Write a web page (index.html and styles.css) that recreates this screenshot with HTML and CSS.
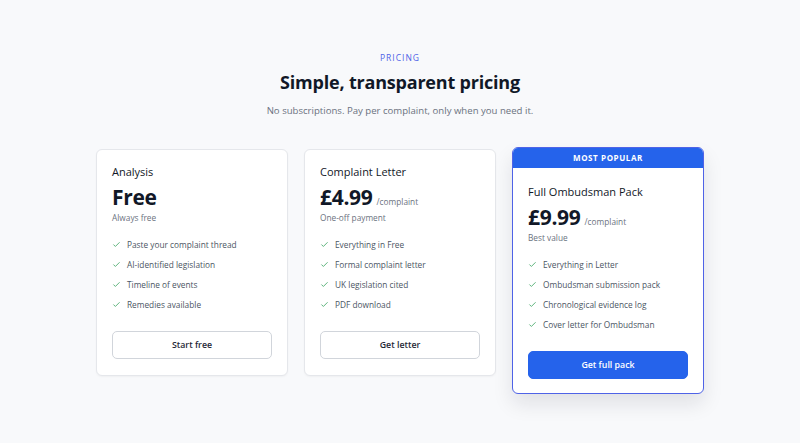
FILE: index.html
```html
<!DOCTYPE html>
<html lang="en">
<head>
  <meta charset="UTF-8" />
  <meta name="viewport" content="width=device-width, initial-scale=1.0"/>
  <title>Pricing</title>
  <link rel="stylesheet" href="styles.css">
</head>
<body>

<section class="pricing">
  <p class="eyebrow">PRICING</p>
  <h1>Simple, transparent pricing</h1>
  <p class="lead">No subscriptions. Pay per complaint, only when you need it.</p>

  <div class="plans">
    <div class="plan">
      <div class="plan-body">
        <h3>Analysis</h3>
        <div class="price"><span class="amount">Free</span></div>
        <p class="note">Always free</p>
        <ul class="features">
          <li><svg viewBox="0 0 16 16"><path d="M3 8.5l3 3 7-7"/></svg>Paste your complaint thread</li>
          <li><svg viewBox="0 0 16 16"><path d="M3 8.5l3 3 7-7"/></svg>AI-identified legislation</li>
          <li><svg viewBox="0 0 16 16"><path d="M3 8.5l3 3 7-7"/></svg>Timeline of events</li>
          <li><svg viewBox="0 0 16 16"><path d="M3 8.5l3 3 7-7"/></svg>Remedies available</li>
        </ul>
        <button type="button" class="btn">Start free</button>
      </div>
    </div>

    <div class="plan">
      <div class="plan-body">
        <h3>Complaint Letter</h3>
        <div class="price"><span class="amount">£4.99</span><span class="per">/complaint</span></div>
        <p class="note">One-off payment</p>
        <ul class="features">
          <li><svg viewBox="0 0 16 16"><path d="M3 8.5l3 3 7-7"/></svg>Everything in Free</li>
          <li><svg viewBox="0 0 16 16"><path d="M3 8.5l3 3 7-7"/></svg>Formal complaint letter</li>
          <li><svg viewBox="0 0 16 16"><path d="M3 8.5l3 3 7-7"/></svg>UK legislation cited</li>
          <li><svg viewBox="0 0 16 16"><path d="M3 8.5l3 3 7-7"/></svg>PDF download</li>
        </ul>
        <button type="button" class="btn">Get letter</button>
      </div>
    </div>

    <div class="plan popular">
      <div class="badge">MOST POPULAR</div>
      <div class="plan-body">
        <h3>Full Ombudsman Pack</h3>
        <div class="price"><span class="amount">£9.99</span><span class="per">/complaint</span></div>
        <p class="note">Best value</p>
        <ul class="features">
          <li><svg viewBox="0 0 16 16"><path d="M3 8.5l3 3 7-7"/></svg>Everything in Letter</li>
          <li><svg viewBox="0 0 16 16"><path d="M3 8.5l3 3 7-7"/></svg>Ombudsman submission pack</li>
          <li><svg viewBox="0 0 16 16"><path d="M3 8.5l3 3 7-7"/></svg>Chronological evidence log</li>
          <li><svg viewBox="0 0 16 16"><path d="M3 8.5l3 3 7-7"/></svg>Cover letter for Ombudsman</li>
        </ul>
        <button type="button" class="btn btn-primary">Get full pack</button>
      </div>
    </div>
  </div>
</section>

</body>
</html>
```

FILE: styles.css
```css
* { box-sizing: border-box; }
body {
  margin: 0; background: #f8f9fb; color: #111827;
  font-family: "Open Sans", "Noto Sans", sans-serif;
}
.pricing { padding: 51px 16px 40px; text-align: center; }
.eyebrow {
  margin: 0; font-size: 8.5px; line-height: 14px; font-weight: 500; letter-spacing: 1px;
  color: #4f63e7;
}
h1 { margin: 5px 0 0; font-size: 18px; line-height: 24px; font-weight: 700; letter-spacing: -0.2px; }
.lead { margin: 10px 0 0; font-size: 9.6px; line-height: 14px; color: #6b7280; }

.plans {
  display: grid; grid-template-columns: repeat(3, 1fr); gap: 16px;
  max-width: 608px; margin: 31px auto 0; align-items: start; text-align: left;
}
.plan {
  background: #fff; border: 1px solid #e5e7eb; border-radius: 6px;
  box-shadow: 0 1px 2px rgba(0, 0, 0, 0.04);
}
.plan-body { padding: 14px 15px 16px; display: flex; flex-direction: column; }
.plan h3 { margin: 0; font-size: 11px; line-height: 15px; font-weight: 500; color: #111827; }
.price { display: flex; align-items: baseline; margin-top: 5px; height: 26px; }
.amount { font-size: 21px; line-height: 26px; font-weight: 700; letter-spacing: -0.3px; }
.per { margin-left: 4px; font-size: 8.3px; line-height: 1; color: #6b7280; }
.note { margin: 2px 0 0; font-size: 8.3px; line-height: 12px; color: #6b7280; }

.features { list-style: none; margin: 10px 0 0; padding: 0; }
.features li {
  display: flex; align-items: center; height: 20px;
  font-size: 8.3px; color: #4b5563;
}
.features svg {
  width: 9px; height: 9px; margin-right: 6px; flex: none;
  fill: none; stroke: #4ead6f; stroke-width: 1.6;
  stroke-linecap: round; stroke-linejoin: round;
}

.btn {
  margin-top: 17px; height: 28px; width: 100%;
  border: 1px solid #d1d5db; border-radius: 5px; background: #fff;
  font-family: inherit; font-size: 8.8px; font-weight: 600; color: #1f2937;
  cursor: pointer;
}
.btn-primary { background: #2563eb; border-color: #2563eb; color: #fff; }

.popular {
  border-color: #4f63e7; margin-top: -2px; overflow: hidden;
  box-shadow: 0 10px 20px rgba(17, 24, 39, 0.1);
}
.popular .plan-body { padding-top: 16px; padding-bottom: 14px; }
.badge {
  height: 20px; line-height: 20px; background: #2563eb; color: #fff;
  text-align: center; font-size: 8px; font-weight: 700; letter-spacing: 0.6px;
}
```
